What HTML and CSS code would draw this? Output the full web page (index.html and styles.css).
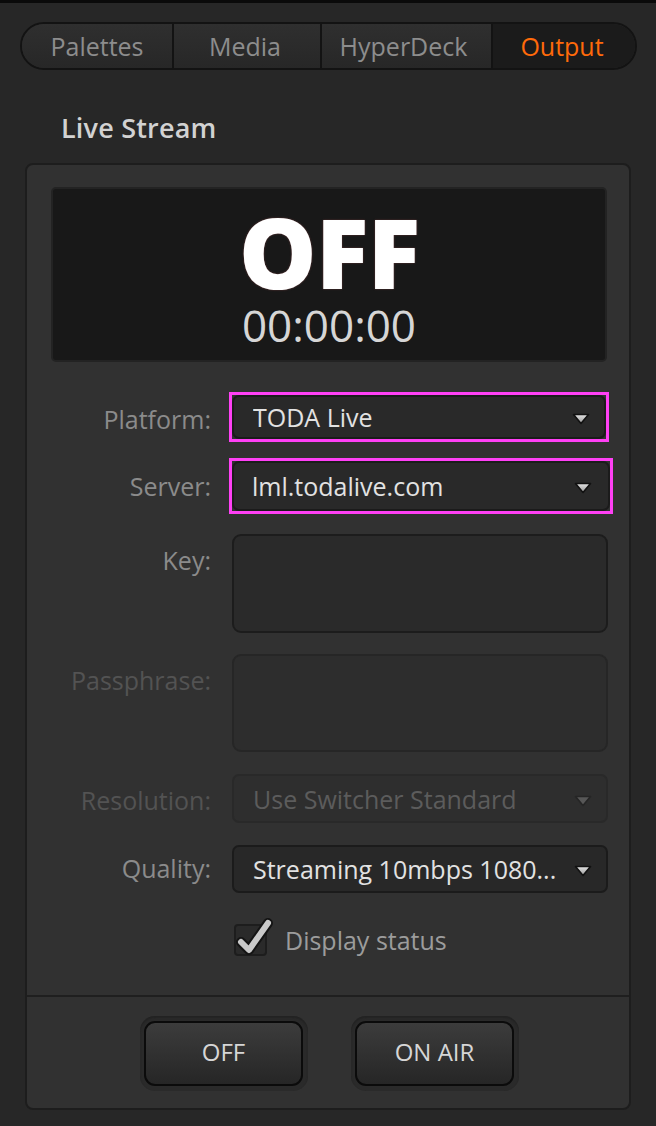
FILE: index.html
```html
<!DOCTYPE html>
<html>
<head>
<meta charset="utf-8">
<link rel="stylesheet" href="styles.css">
</head>
<body>
<div class="topline"></div>
<nav class="tabs">
  <div class="tab t1">Palettes</div>
  <div class="tab t2">Media</div>
  <div class="tab t3">HyperDeck</div>
  <div class="tab t4 active">Output</div>
</nav>
<h2 class="title">Live Stream</h2>
<section class="panel">
  <div class="display">
    <div class="state">OFF</div>
    <div class="time">00:00:00</div>
  </div>
  <div class="row r-platform">
    <div class="label mid">Platform:</div>
    <div class="hl hl-platform">
      <div class="select"><span>TODA Live</span><svg class="arrow" viewBox="0 0 18 12" width="18" height="12"><defs><linearGradient id="g" x1="0" y1="0" x2="0" y2="1"><stop offset="0" stop-color="#e4e4e4"/><stop offset="1" stop-color="#9a9a9a"/></linearGradient></defs><path d="M1.5 1.5 H16.5 L9 10.5 Z" fill="url(#g)" stroke="#111" stroke-width="1.6" stroke-linejoin="round"/></svg></div>
    </div>
  </div>
  <div class="row r-server">
    <div class="label mid">Server:</div>
    <div class="hl hl-server">
      <div class="select"><span>lml.todalive.com</span><svg class="arrow" viewBox="0 0 18 12" width="18" height="12"><path d="M1.5 1.5 H16.5 L9 10.5 Z" fill="url(#g)" stroke="#111" stroke-width="1.6" stroke-linejoin="round"/></svg></div>
    </div>
  </div>
  <div class="row r-key">
    <div class="label">Key:</div>
    <div class="textbox"></div>
  </div>
  <div class="row r-pass">
    <div class="label disabled">Passphrase:</div>
    <div class="textbox off"></div>
  </div>
  <div class="row r-res">
    <div class="label disabled">Resolution:</div>
    <div class="select off sel-res"><span>Use Switcher Standard</span><svg class="arrow" viewBox="0 0 18 12" width="18" height="12"><path d="M1.5 1.5 H16.5 L9 10.5 Z" fill="#575757" stroke="#252525" stroke-width="1.6" stroke-linejoin="round"/></svg></div>
  </div>
  <div class="row r-quality">
    <div class="label">Quality:</div>
    <div class="select sel-quality"><span>Streaming 10mbps 1080...</span><svg class="arrow" viewBox="0 0 18 12" width="18" height="12"><path d="M1.5 1.5 H16.5 L9 10.5 Z" fill="url(#g)" stroke="#111" stroke-width="1.6" stroke-linejoin="round"/></svg></div>
  </div>
  <div class="checkrow">
    <div class="checkbox">
      <svg class="check" viewBox="0 0 40 40" width="40" height="40">
        <path d="M7 25 L15 33 L34 6" fill="none" stroke="#141414" stroke-width="10" stroke-linecap="round" stroke-linejoin="round"/>
        <path d="M7 25 L15 33 L34 6" fill="none" stroke="#c9c9c9" stroke-width="6" stroke-linecap="round" stroke-linejoin="round"/>
      </svg>
    </div>
    <span class="checklabel">Display status</span>
  </div>
  <div class="divider"></div>
  <div class="buttons">
    <div class="well"><div class="btn">OFF</div></div>
    <div class="well"><div class="btn">ON AIR</div></div>
  </div>
</section>
</body>
</html>
```
FILE: styles.css
```css
* { box-sizing: border-box; }
html, body { margin: 0; padding: 0; }
body {
  background: #272727;
  width: 656px;
  height: 1126px;
  overflow: hidden;
  font-family: "Open Sans", "Noto Sans", sans-serif;
}
.topline { height: 3px; background: #0a0a0a; }

.tabs {
  display: flex;
  margin: 19px 0 0 20px;
  width: 617px;
  height: 48px;
  border: 2px solid #131313;
  border-radius: 24px;
  overflow: hidden;
}
.tab {
  display: flex;
  align-items: center;
  justify-content: center;
  font-size: 25px;
  color: #8d8d8d;
  background: linear-gradient(#2f2f2f, #272727);
  border-left: 2px solid #131313;
  padding-bottom: 1px;
}
.t1 { width: 150px; border-left: none; padding-left: 0; }
.t2 { width: 148px; padding-right: 4px; }
.t3 { width: 171px; padding-right: 6px; }
.t4 { flex: 1; padding-right: 4px; }
.tab.active { background: #1b1b1b; color: #ff6a0a; }

.title {
  margin: 40px 0 0 61px;
  height: 36px;
  line-height: 36px;
  font-size: 27px;
  font-weight: 600;
  color: #d2d2d2;
  letter-spacing: 0.2px;
}

.panel {
  margin: 17px 0 0 25px;
  width: 606px;
  height: 947px;
  border: 2px solid #1d1d1d;
  border-radius: 8px;
  background: #313131;
  display: flex;
  flex-direction: column;
}
.display {
  margin: 22px 0 0 24px;
  width: 556px;
  height: 175px;
  border: 2px solid #232323;
  border-radius: 5px;
  background: #181818;
  display: flex;
  flex-direction: column;
  align-items: center;
}
.state {
  margin-top: 18px;
  height: 88px;
  font-size: 98px;
  font-weight: 800;
  line-height: 88px;
  color: #ffffff;
  text-shadow: 0 0 2px #6a3a3a;
  letter-spacing: -1px;
}
.time {
  margin-top: 7px;
  height: 46px;
  font-size: 44px;
  line-height: 46px;
  color: #d6d6d6;
}

.row {
  display: flex;
  align-items: flex-start;
  gap: 21px;
}
.label {
  width: 184px;
  text-align: right;
  font-size: 25px;
  color: #8b8b8b;
  line-height: 34px;
  padding-top: 9px;
}
.label.mid { align-self: center; padding-top: 0; }
.r-platform .label { padding-top: 3px; }
.label.disabled { color: #535353; }
.r-quality .label { padding-top: 6px; }

.r-platform { margin-top: 30px; gap: 18px; }
.r-server { margin-top: 16px; gap: 18px; }
.r-key { margin-top: 20px; }
.r-pass { margin-top: 21px; }
.r-res { margin-top: 22px; }
.r-quality { margin-top: 22px; }

.hl { border: 3px solid #ff40f5; }
.hl-platform { width: 380px; height: 50px; }
.hl-server { width: 384px; height: 56px; }

.select {
  width: 376px;
  height: 48px;
  border: 2px solid #1b1b1b;
  border-radius: 7px;
  background: #292929;
  display: flex;
  align-items: center;
  padding: 0 14px 0 19px;
  font-size: 25px;
  color: #e2e2e2;
}
.hl .select { width: 100%; height: 100%; }
.hl-server .select { padding-left: 18px; padding-right: 16px; }
.select span { flex: 1; white-space: nowrap; overflow: hidden; }
.select .arrow { flex: none; margin-top: 4px; }
.select.off {
  background: #2e2e2e;
  border-color: #292929;
  color: #5c5c5c;
  height: 49px;
}
.sel-quality { background: #282828; }

.textbox {
  width: 376px;
  height: 99px;
  border: 2px solid #1c1c1c;
  border-radius: 9px;
  background: #2a2a2a;
}
.textbox.off {
  height: 98px;
  background: #2d2d2d;
  border-color: #262626;
}

.checkrow {
  margin: 30px 0 0 207px;
  display: flex;
  align-items: center;
}
.checkbox {
  position: relative;
  width: 33px;
  height: 32px;
  border: 2px solid #1d1d1d;
  border-radius: 4px;
  background: #2a2a2a;
}
.check {
  position: absolute;
  left: -2px;
  top: -9px;
}
.checklabel {
  margin-left: 18px;
  font-size: 25px;
  color: #9c9c9c;
}

.divider {
  margin-top: 38px;
  height: 2px;
  background: #1f1f1f;
}
.buttons {
  display: flex;
  justify-content: center;
  gap: 43px;
  padding-top: 19px;
  padding-left: 2px;
}
.well {
  width: 168px;
  height: 75px;
  border-radius: 15px;
  background: #2a2a2a;
  box-shadow: inset 0 2px 2px #222;
  display: flex;
  align-items: center;
  justify-content: center;
}
.btn {
  width: 159px;
  height: 65px;
  border: 2px solid #0b0b0b;
  border-radius: 11px;
  background: linear-gradient(#3c3c3c, #262626);
  display: flex;
  align-items: center;
  justify-content: center;
  font-size: 24px;
  color: #d6d6d6;
  padding-bottom: 4px;
}
```
